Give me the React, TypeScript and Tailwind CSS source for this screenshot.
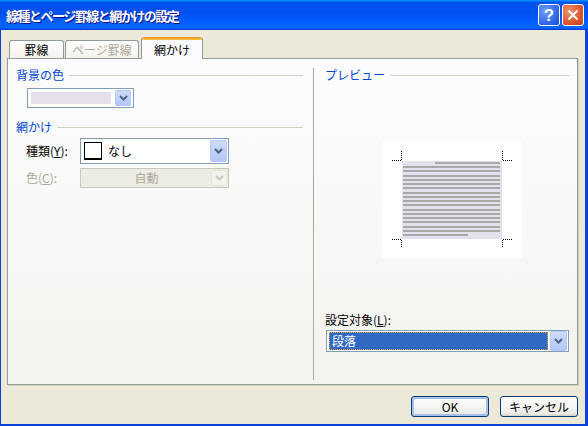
import clsx from "clsx";

function Arrow({ disabled }: { disabled?: boolean }) {
  return (
    <svg width="9" height="6" viewBox="0 0 9 6">
      <path d="M1 1l3.5 3.5L8 1" fill="none" stroke={disabled ? "#c9c7ba" : "#4d6185"} strokeWidth="2" />
    </svg>
  );
}

function DropBtn({ disabled, className }: { disabled?: boolean; className?: string }) {
  return (
    <div
      className={clsx(
        "flex shrink-0 items-center justify-center rounded-[2px] border",
        disabled
          ? "border-[#e6e4d8] bg-[#f3f2ec]"
          : "border-[#b5c8f5] bg-[linear-gradient(to_bottom,#cddbfc,#b3c6f6)]",
        className
      )}
    >
      <Arrow disabled={disabled} />
    </div>
  );
}

function GroupHead({ label }: { label: string }) {
  return (
    <div className="flex h-[12px] items-center leading-[12px]">
      <span className="text-[#0046d5]">{label}</span>
      <div className="ml-[5px] h-px flex-1 bg-[#d0d0bf]" />
    </div>
  );
}

function Preview() {
  const lines = Array.from({ length: 18 }, (_, i) => i);
  return (
    <svg width="140" height="118" viewBox="0 0 140 118" className="block">
      <rect x="0" y="0" width="140" height="118" fill="#fff" />
      <rect x="20" y="21" width="100" height="78" fill="#e5e0ec" />
      {lines.map((i) => {
        const y = 22 + Math.round(i * 4.24);
        const x1 = i === 0 ? 53 : 21;
        const x2 = i === 17 ? 86 : 118;
        return <rect key={i} x={x1} y={y} width={x2 - x1} height="2" fill="#a9a9a9" />;
      })}
      <g stroke="#000" strokeWidth="1" strokeDasharray="1 1" fill="none">
        <path d="M10 20.5h9M19.5 11v9" />
        <path d="M121 20.5h9M120.5 11v9" />
        <path d="M10 99.5h9M19.5 100v8" />
        <path d="M121 99.5h9M120.5 100v8" />
      </g>
    </svg>
  );
}

export default function App() {
  return (
    <div className="flex h-[426px] w-[588px] flex-col bg-[#0842d8] font-['Noto_Sans_CJK_JP',sans-serif] text-[12px] text-black">
      {/* title bar */}
      <div className="flex h-[30px] shrink-0 items-center bg-[linear-gradient(180deg,#0997ff,#0053ee_8%,#0050ee_40%,#06f_88%,#06f_93%,#005bff_95%,#003dd7_96%,#003dd7)] pl-[6px] pr-[4px]">
        <span className="flex-1 text-[13px] font-bold leading-none tracking-[-1.5px] text-white [text-shadow:1px_1px_#0f1089]">
          線種とページ罫線と網かけの設定
        </span>
        <div className="flex gap-[2px]">
          <div className="flex h-[22px] w-[22px] items-center justify-center rounded-[3px] border border-white bg-[radial-gradient(circle_at_30%_30%,#6d9cf7,#2a63e6_70%,#1c4fd4)] font-['Liberation_Sans',sans-serif] text-[17px] font-bold leading-none text-white">
            ?
          </div>
          <div className="flex h-[22px] w-[22px] items-center justify-center rounded-[3px] border border-white bg-[radial-gradient(circle_at_30%_30%,#f0916d,#d9522a_65%,#c23e17)]">
            <svg width="12" height="12" viewBox="0 0 12 12">
              <path d="M1.5 1.5l9 9M10.5 1.5l-9 9" stroke="#fff" strokeWidth="2" />
            </svg>
          </div>
        </div>
      </div>

      {/* body */}
      <div className="mb-[2px] ml-px mr-[3px] flex flex-1 flex-col bg-[#ece9d8] pl-[6px] pr-[7px] pt-[7px]">
        {/* tabs */}
        <div className="flex h-[21px] items-end gap-px pl-[2px]">
          <div className="flex h-[18px] w-[55px] items-center justify-center rounded-t-[3px] border border-b-0 border-[#919b9c] bg-[linear-gradient(to_bottom,#fff,#f3f2ec)]">
            罫線
          </div>
          <div className="flex h-[18px] w-[74px] items-center justify-center rounded-t-[3px] border border-b-0 border-[#919b9c] bg-[linear-gradient(to_bottom,#fff,#f3f2ec)] text-[#aca899]">
            ページ罫線
          </div>
          <div className="relative z-10 -mb-px ml-px flex h-[22px] w-[62px] flex-col rounded-t-[3px] border-x border-[#919b9c] bg-[#fcfcfe]">
            <div className="h-[3px] rounded-t-[3px] bg-[linear-gradient(to_bottom,#e68b2c,#ffc73c)]" />
            <div className="flex flex-1 items-center justify-center">網かけ</div>
          </div>
        </div>

        {/* panel */}
        <div className="flex h-[327px] border border-[#919b9c] bg-[linear-gradient(to_bottom,#fcfcfe,#f4f3ee)] shadow-[1px_1px_0_#d0cebf]">
          {/* left column */}
          <div className="flex w-[306px] flex-col pl-[8px] pr-[10px] pt-[10px]">
            <GroupHead label="背景の色" />
            <div className="ml-[11px] mt-[7px] flex h-[20px] w-[107px] items-center border border-[#7f9db9] bg-white pl-[3px] pr-[2px]">
              <div className="h-[12px] w-[80px] bg-[#e5e0ec]" />
              <div className="flex-1" />
              <DropBtn className="h-[16px] w-[16px]" />
            </div>

            <div className="mt-[13px]">
              <GroupHead label="網かけ" />
            </div>

            <div className="mt-[5px] flex h-[26px] items-center">
              <span className="ml-[10px] w-[54px]">
                種類(<span className="underline">Y</span>):
              </span>
              <div className="flex h-[26px] w-[149px] items-center border border-[#7f9db9] bg-white p-px">
                <div className="ml-[2px] h-[18px] w-[18px] border border-b-2 border-black bg-white" />
                <span className="ml-[6px] flex-1">なし</span>
                <DropBtn className="h-[22px] w-[17px]" />
              </div>
            </div>

            <div className="mt-[4px] flex h-[20px] items-center text-[#aca899]">
              <span className="ml-[10px] w-[54px]">
                色(<span className="underline">C</span>):
              </span>
              <div className="flex h-[20px] w-[149px] items-center border border-[#c9c7ba] bg-[#ecebe4] p-px">
                <span className="flex-1 text-center">自動</span>
                <DropBtn disabled className="h-[16px] w-[16px]" />
              </div>
            </div>
          </div>

          {/* separator */}
          <div className="mb-[4px] mt-[9px] w-px bg-[#aca899]" />

          {/* right column */}
          <div className="flex flex-1 flex-col pl-[11px] pr-[8px] pt-[10px]">
            <GroupHead label="プレビュー" />
            <div className="ml-[57px] mt-[59px]">
              <Preview />
            </div>
            <div className="mt-[56px] h-[12px] leading-[12px]">
              設定対象(<span className="underline">L</span>):
            </div>
            <div className="ml-px mt-[4px] flex h-[22px] w-[243px] items-center border border-[#7f9db9] bg-white p-px">
              <div className="ml-px flex h-[18px] flex-1 items-center border border-dotted border-[#f0a030] bg-[#316ac5] pl-[2px] text-white">
                段落
              </div>
              <DropBtn className="ml-[2px] h-[20px] w-[17px]" />
            </div>
          </div>
        </div>

        {/* buttons */}
        <div className="mt-[11px] flex justify-end gap-[11px]">
          <button className="h-[21px] w-[78px] rounded-[3px] border border-[#003c74] bg-[linear-gradient(180deg,#fff,#ecebe6_86%,#d6d0c5)] shadow-[inset_0_0_0_2px_#a6c1ee]">
            OK
          </button>
          <button className="h-[21px] w-[78px] rounded-[3px] border border-[#003c74] bg-[linear-gradient(180deg,#fff,#ecebe6_86%,#d6d0c5)]">
            キャンセル
          </button>
        </div>
      </div>
    </div>
  );
}
